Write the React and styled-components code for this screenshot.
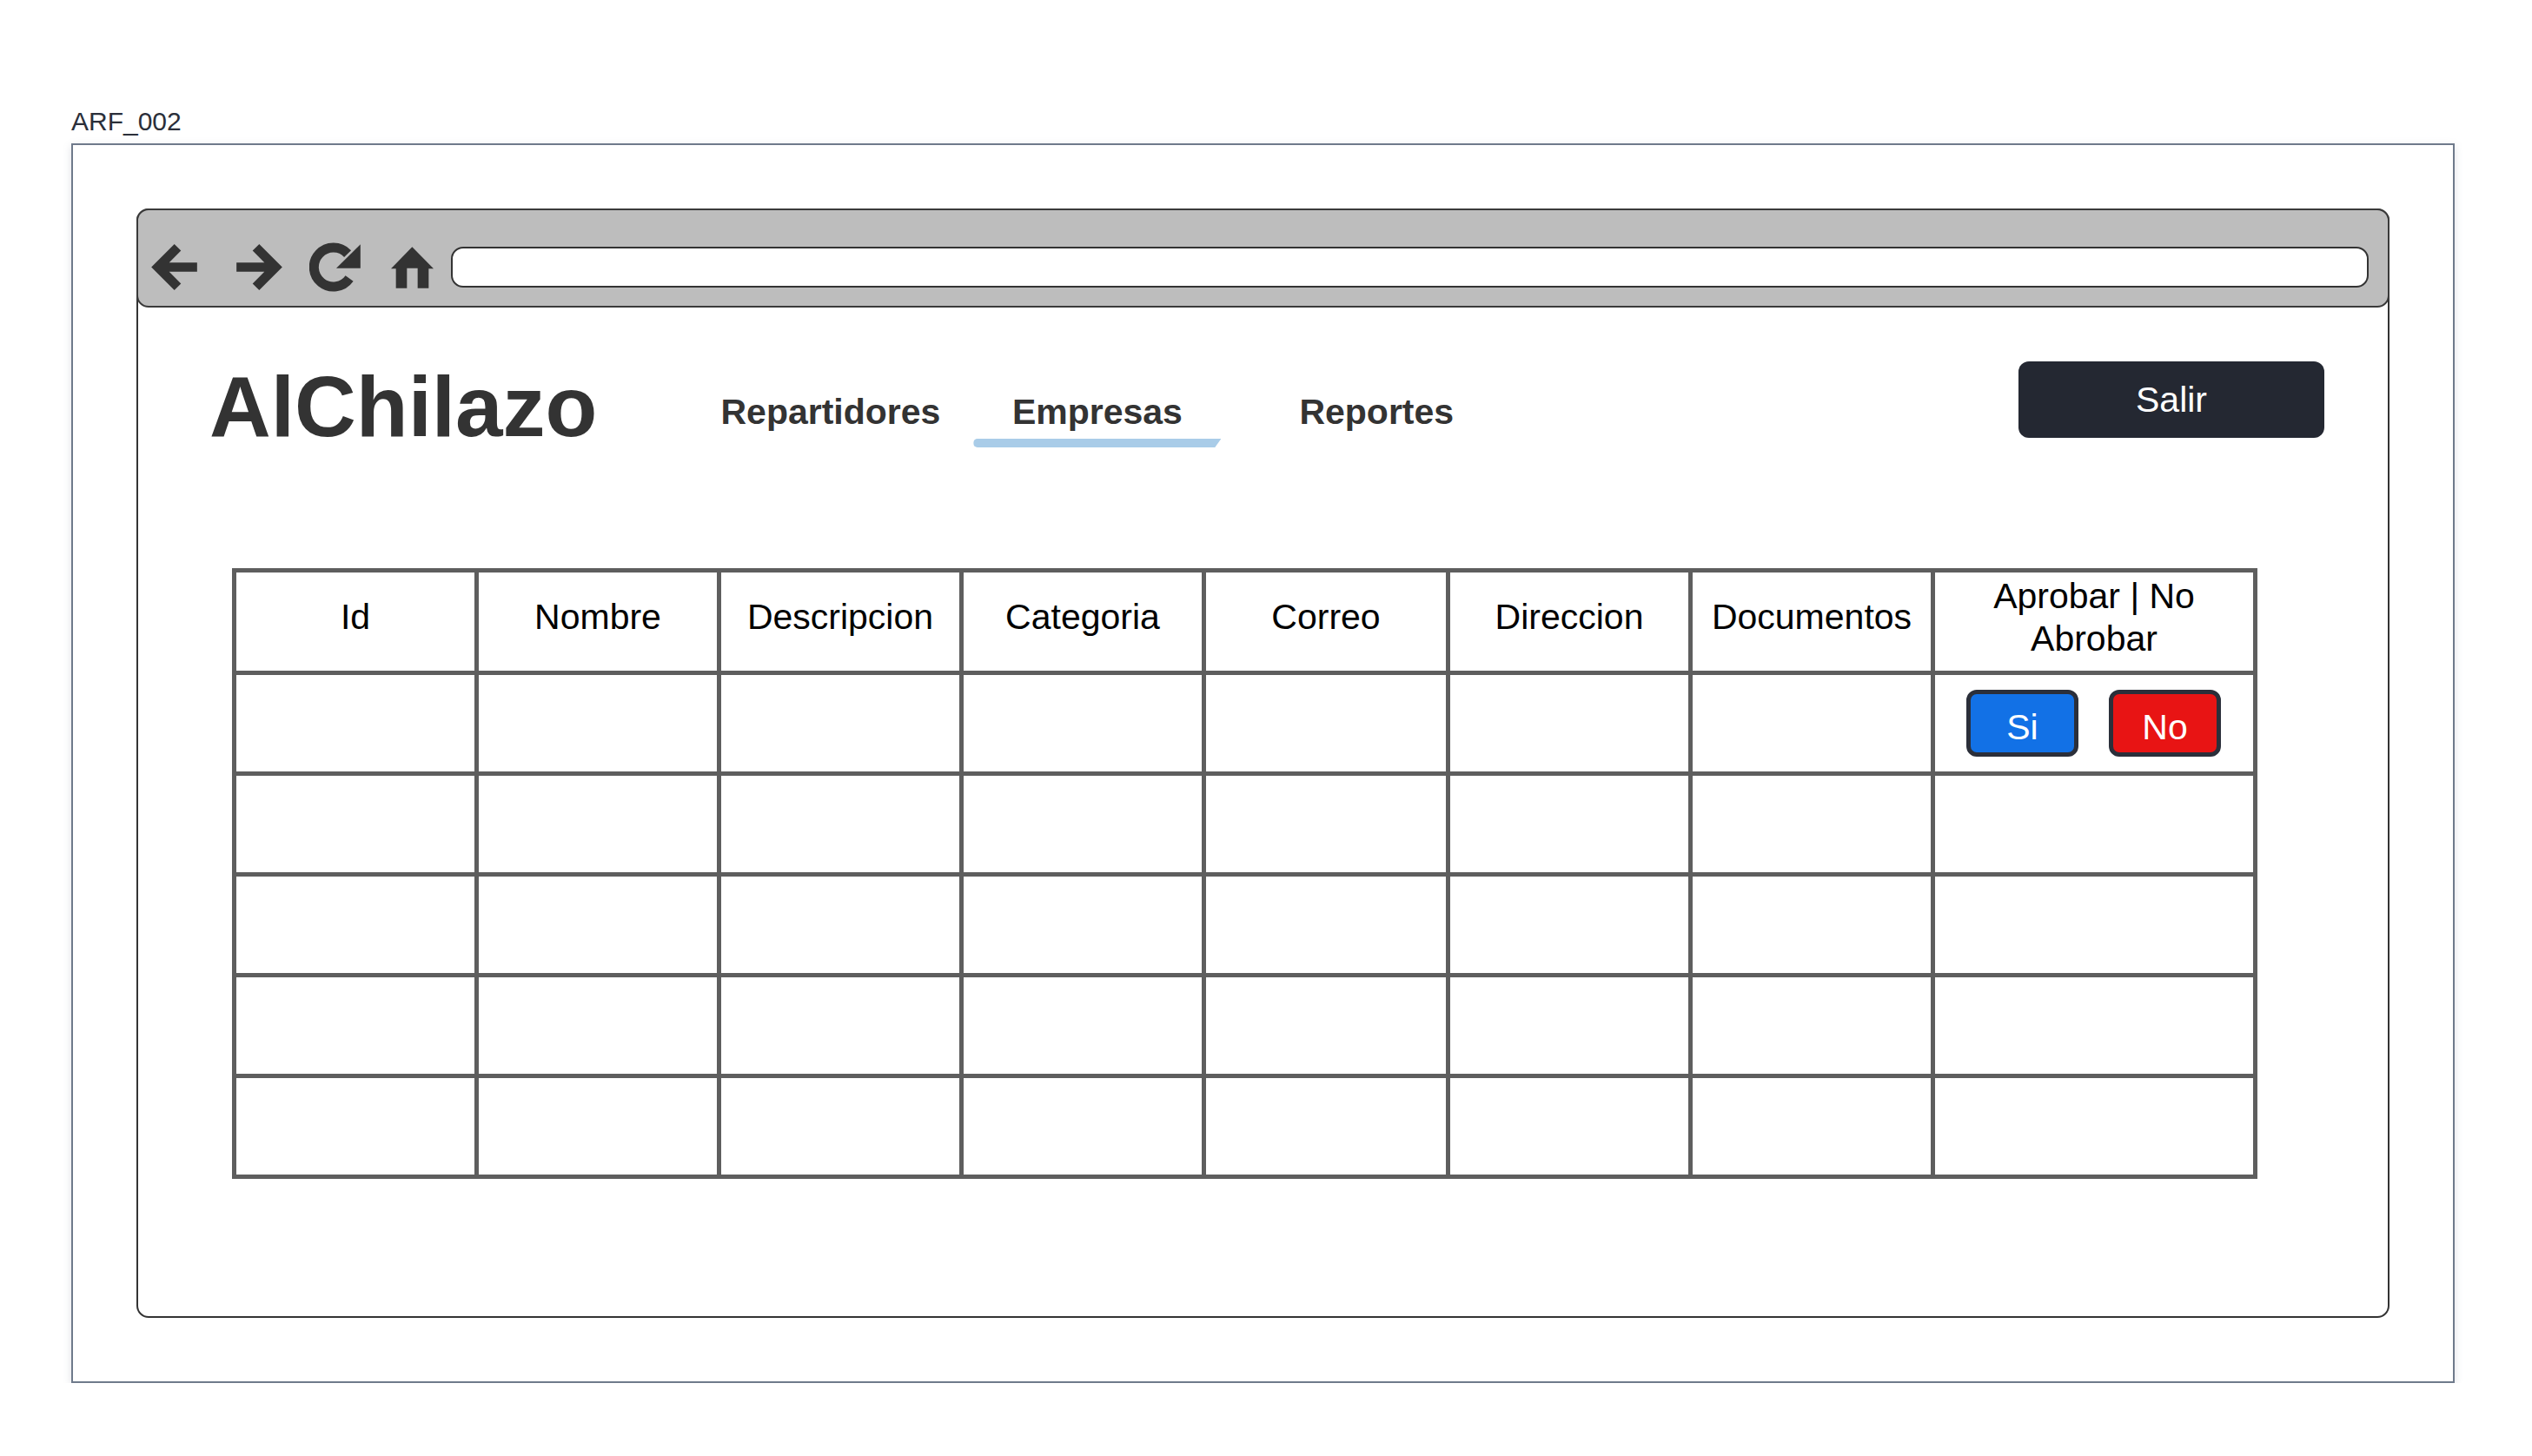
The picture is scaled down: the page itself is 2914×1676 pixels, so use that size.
import React from "react";
import styled, { createGlobalStyle } from "styled-components";

const columns = ["Id", "Nombre", "Descripcion", "Categoria", "Correo", "Direccion", "Documentos", "Aprobar | No Abrobar"];
const widths = [279, 279, 279, 279, 281, 279, 279, 371];
const emptyRows = [1, 2, 3, 4];

export default function App() {
  return (
    <Page>
      <GlobalStyle />
      <Label>ARF_002</Label>
      <Frame>
        <Browser>
          <Toolbar>
            <ToolIcon viewBox="0 0 159 160" $w={53} $h={53}>
              <polygon points="0,80 80,0 103,23 62,64 159,64 159,96 62,96 103,137 80,160" />
            </ToolIcon>
            <ToolIcon viewBox="0 0 159 160" $w={53} $h={53} $left={45}>
              <polygon points="159,80 79,0 56,23 97,64 0,64 0,96 97,96 56,137 79,160" />
            </ToolIcon>
            <ToolIcon viewBox="0 0 175 170" $w={59} $h={57} $left={31}>
              <path d="M131 39A67 67 0 1 0 137 124" fill="none" stroke="#333" strokeWidth="33" />
              <polygon points="175,7 175,89 92,89" />
            </ToolIcon>
            <ToolIcon viewBox="0 0 147 142" $w={49} $h={48} $left={35}>
              <polygon points="0,75 73,0 147,75 130,75 130,142 92,142 92,73 55,73 55,142 17,142 17,75" />
            </ToolIcon>
            <AddressBar />
          </Toolbar>
          <Content>
            <Header>
              <Title>AlChilazo</Title>
              <Nav>
                <NavLink>Repartidores</NavLink>
                <ActiveTab>
                  <NavLink>Empresas</NavLink>
                  <Underline />
                </ActiveTab>
                <NavLink>Reportes</NavLink>
              </Nav>
              <ExitButton>Salir</ExitButton>
            </Header>
            <Grid>
              <colgroup>
                {widths.map((w, i) => (
                  <col key={i} style={{ width: w }} />
                ))}
              </colgroup>
              <thead>
                <HeadRow>
                  {columns.map((c) => (
                    <HeadCell key={c}>{c}</HeadCell>
                  ))}
                </HeadRow>
              </thead>
              <tbody>
                <BodyRow>
                  {columns.slice(0, 7).map((c) => (
                    <Cell key={c} />
                  ))}
                  <Cell>
                    <Actions>
                      <ActionButton $bg="#1271e6">Si</ActionButton>
                      <ActionButton $bg="#e81414">No</ActionButton>
                    </Actions>
                  </Cell>
                </BodyRow>
                {emptyRows.map((r) => (
                  <BodyRow key={r}>
                    {columns.map((c) => (
                      <Cell key={c} />
                    ))}
                  </BodyRow>
                ))}
              </tbody>
            </Grid>
          </Content>
        </Browser>
      </Frame>
    </Page>
  );
}

const GlobalStyle = createGlobalStyle`
  body {
    margin: 0;
    background: #fff;
    font-family: "Liberation Sans", Arial, sans-serif;
  }
`;
const Page = styled.div`
  padding: 123px 0 0 82px;
`;
const Label = styled.div`
  font-size: 30px;
  line-height: 34px;
  color: #2b2f3a;
  margin-bottom: 8px;
`;
const Frame = styled.div`
  box-sizing: border-box;
  width: 2743px;
  height: 1427px;
  padding: 73px;
  display: flex;
  background: #fff;
  border: 2px solid #6f7a8b;
  box-shadow: 0 3px 9px rgba(110, 120, 140, 0.22);
`;
const Browser = styled.div`
  flex: 1;
  display: flex;
  flex-direction: column;
  border: 2px solid #333;
  border-radius: 14px;
`;
const Toolbar = styled.div`
  box-sizing: border-box;
  display: flex;
  align-items: center;
  height: 114px;
  margin: -2px;
  padding: 21px 22px 0 15px;
  background: #bdbdbd;
  border: 2px solid #3a3a3a;
  border-radius: 14px;
`;
const ToolIcon = styled.svg`
  flex: none;
  width: ${(p) => p.$w}px;
  height: ${(p) => p.$h}px;
  margin-left: ${(p) => p.$left || 0}px;
  fill: #333;
`;
const AddressBar = styled.div`
  flex: 1;
  box-sizing: border-box;
  height: 47px;
  margin-left: 20px;
  background: #fff;
  border: 2px solid #333;
  border-radius: 14px;
`;
const Content = styled.div`
  flex: 1;
  padding: 64px 73px 0 82px;
`;
const Header = styled.div`
  display: flex;
  align-items: flex-start;
`;
const Title = styled.h1`
  margin: 3px 0 0;
  font-size: 98px;
  line-height: 1;
  font-weight: 700;
  color: #333;
`;
const Nav = styled.nav`
  display: flex;
  align-items: flex-start;
  margin: 38px 0 0 142px;
`;
const NavLink = styled.div`
  font-size: 41px;
  line-height: 1;
  font-weight: 700;
  color: #333;
`;
const ActiveTab = styled.div`
  width: 285px;
  margin: 0 90px 0 38px;
  text-align: center;
`;
const Underline = styled.div`
  height: 10px;
  margin-top: 10px;
  background: #a9cce8;
  border-radius: 5px 0 0 5px;
  clip-path: polygon(0 0, 100% 0, 97.5% 100%, 0 100%);
`;
const ExitButton = styled.button`
  width: 352px;
  height: 88px;
  margin-left: auto;
  padding: 0;
  border: 0;
  border-radius: 12px;
  background: #242832;
  color: #fff;
  font: 41px "Liberation Sans", Arial, sans-serif;
`;
const Grid = styled.table`
  table-layout: fixed;
  width: 2325px;
  margin: 137px 0 0 26px;
  border-collapse: collapse;
  border: 5px solid #5e5e5e;
`;
const HeadRow = styled.tr`
  height: 118px;
`;
const HeadCell = styled.th`
  padding: 0 8px 10px;
  border: 5px solid #5e5e5e;
  font-size: 41px;
  line-height: 49px;
  font-weight: 400;
  color: #000;
  text-align: center;
`;
const BodyRow = styled.tr`
  height: 116px;
`;
const Cell = styled.td`
  padding: 0;
  border: 5px solid #5e5e5e;
`;
const Actions = styled.div`
  display: flex;
  gap: 35px;
  padding-left: 36px;
`;
const ActionButton = styled.button`
  box-sizing: border-box;
  width: 129px;
  height: 77px;
  padding: 9px 0 0;
  border: 5px solid #2b2f3a;
  border-radius: 12px;
  background: ${(p) => p.$bg};
  color: #fff;
  font: 41px "Liberation Sans", Arial, sans-serif;
`;
